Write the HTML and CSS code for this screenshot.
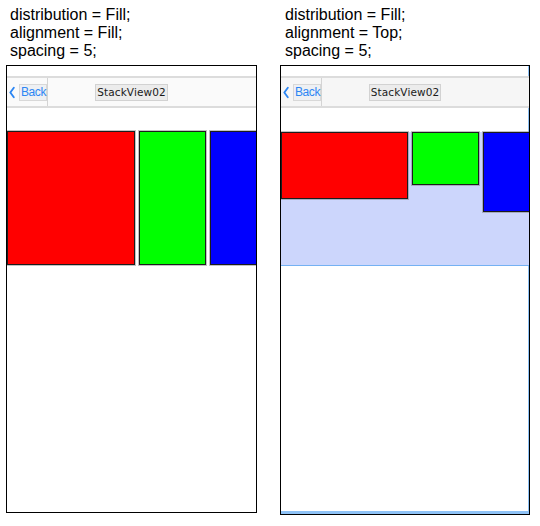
FILE: index.html
```html
<!DOCTYPE html>
<html>
<head>
<meta charset="utf-8">
<link rel="stylesheet" href="styles.css">
</head>
<body>
<div class="page">
  <section class="panel panel-a">
    <p class="caption">distribution = Fill;<br>alignment = Fill;<br>spacing = 5;</p>
    <div class="phone phone-a">
      <div class="status"></div>
      <div class="nav">
        <div class="back">
          <svg class="chev" width="8" height="17" viewBox="0 0 8 17"><path d="M6.5 2 L1.8 8.5 L6.5 15" fill="none" stroke="#2c86f3" stroke-width="2.5" stroke-linecap="round" stroke-linejoin="round"/></svg>
          <span class="back-label">Back</span>
        </div>
        <div class="title">StackView02</div>
        <div class="nav-right"></div>
      </div>
      <div class="spacer"></div>
      <div class="stack stack-fill">
        <div class="view red w-red"></div>
        <div class="view green w-green"></div>
        <div class="view blue w-blue"></div>
      </div>
    </div>
  </section>
  <section class="panel panel-b">
    <p class="caption">distribution = Fill;<br>alignment = Top;<br>spacing = 5;</p>
    <div class="phone phone-b">
      <div class="status"></div>
      <div class="nav nav-b">
        <div class="back">
          <svg class="chev" width="8" height="17" viewBox="0 0 8 17"><path d="M6.5 2 L1.8 8.5 L6.5 15" fill="none" stroke="#2c86f3" stroke-width="2.5" stroke-linecap="round" stroke-linejoin="round"/></svg>
          <span class="back-label">Back</span>
        </div>
        <div class="title">StackView02</div>
        <div class="nav-right"></div>
      </div>
      <div class="spacer spacer-b"></div>
      <div class="stack stack-top">
        <div class="view red w-red-b h-red"></div>
        <div class="view green w-green h-green"></div>
        <div class="view blue w-blue h-blue"></div>
      </div>
    </div>
  </section>
</div>
</body>
</html>
```

FILE: styles.css
```css
html, body {
  margin: 0;
  padding: 0;
  background: #fff;
}

.page {
  display: flex;
  align-items: flex-start;
  padding-top: 6px;
  font-family: "Liberation Sans", Arial, sans-serif;
}

.panel-a {
  margin-left: 6px;
  width: 251px;
}

.panel-b {
  margin-left: 23px;
  width: 250px;
}

.caption {
  margin: 0 0 5px;
  font-size: 16px;
  line-height: 18px;
  color: #000;
}

.panel-a .caption { padding-left: 4px; }
.panel-b .caption { padding-left: 5px; }

.phone {
  box-sizing: border-box;
  border: 1px solid #000;
  background: #fff;
  overflow: hidden;
}

.phone-a { height: 448px; }

.phone-b {
  height: 450px;
  box-shadow: inset -1px -3px 0 #8ec2f6;
}

.status {
  height: 10px;
}

.nav {
  height: 28px;
  border-top: 2px solid #dcdcdc;
  border-bottom: 2px solid #dcdcdc;
  background: #fafafa;
  display: grid;
  grid-template-columns: 1fr auto 1fr;
  align-items: center;
}

.nav-b {
  background: #f6f6f6;
}

.back {
  justify-self: start;
  box-sizing: border-box;
  width: 41px;
  height: 28px;
  border-right: 1px solid #d4d4d4;
  display: flex;
  align-items: center;
  padding-left: 2px;
  gap: 4px;
}

.chev {
  display: block;
}

.back-label {
  font-size: 12px;
  line-height: 15px;
  letter-spacing: -0.4px;
  color: #2c86f3;
  background: #eef0f3;
  border: 1px solid #d8d8d8;
  padding: 0 0 0 1px;
}

.title {
  font-family: "DejaVu Sans", sans-serif;
  font-size: 10.5px;
  line-height: 15px;
  color: #1a1a1a;
  background: #ececec;
  border: 1px solid #d2d2d2;
  padding: 0 1px;
  letter-spacing: 0.1px;
}

.spacer {
  height: 23px;
}

.spacer-b {
  height: 24px;
}

.stack {
  display: flex;
  gap: 4px;
}

.stack-fill {
  height: 134px;
  align-items: stretch;
}

.stack-top {
  box-sizing: border-box;
  height: 134px;
  align-items: flex-start;
  background: #ccd6fc;
  border-bottom: 1px solid #74b1f3;
}

.view {
  box-sizing: border-box;
  border: 1px solid #1c1c1c;
  box-shadow: 0 0 0 1px rgba(120, 120, 120, 0.45);
  flex: none;
}

.red { background: #ff0000; }
.green { background: #00ff00; }
.blue { background: #0000ff; }

.w-red { width: 128px; }
.w-red-b { width: 127px; }
.w-green { width: 67px; }
.w-blue { width: 48px; }

.h-red { height: 67px; }
.h-green { height: 53px; }
.h-blue { height: 80px; }
```
